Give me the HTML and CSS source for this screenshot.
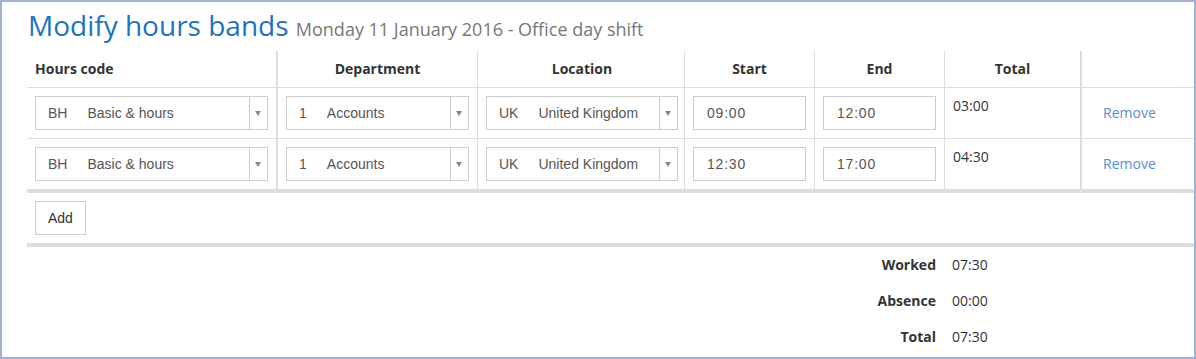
FILE: index.html
```html
<!DOCTYPE html>
<html lang="en">
<head>
  <meta charset="UTF-8">
  <title>Modify hours bands</title>
  <link rel="stylesheet" href="styles.css">
</head>
<body>
  <div class="window">
    <h1 class="title">Modify hours bands <small>Monday 11 January 2016 - Office day shift</small></h1>

    <table class="bands">
      <thead>
        <tr>
          <th class="col-code">Hours code</th>
          <th class="col-dept">Department</th>
          <th class="col-loc">Location</th>
          <th class="col-time">Start</th>
          <th class="col-time">End</th>
          <th class="col-total">Total</th>
          <th class="col-action"></th>
        </tr>
      </thead>
      <tbody>
        <tr>
          <td class="col-code"><div class="select"><span class="value"><span class="code">BH</span>Basic &amp; hours</span><span class="arrow"></span></div></td>
          <td class="col-dept"><div class="select"><span class="value"><span class="code">1</span>Accounts</span><span class="arrow"></span></div></td>
          <td class="col-loc"><div class="select"><span class="value"><span class="code">UK</span>United Kingdom</span><span class="arrow"></span></div></td>
          <td class="col-time"><input class="time" type="text" value="09:00"></td>
          <td class="col-time"><input class="time" type="text" value="12:00"></td>
          <td class="col-total">03:00</td>
          <td class="col-action"><a class="btn-link" href="#">Remove</a></td>
        </tr>
        <tr>
          <td class="col-code"><div class="select"><span class="value"><span class="code">BH</span>Basic &amp; hours</span><span class="arrow"></span></div></td>
          <td class="col-dept"><div class="select"><span class="value"><span class="code">1</span>Accounts</span><span class="arrow"></span></div></td>
          <td class="col-loc"><div class="select"><span class="value"><span class="code">UK</span>United Kingdom</span><span class="arrow"></span></div></td>
          <td class="col-time"><input class="time" type="text" value="12:30"></td>
          <td class="col-time"><input class="time" type="text" value="17:00"></td>
          <td class="col-total">04:30</td>
          <td class="col-action"><a class="btn-link" href="#">Remove</a></td>
        </tr>
      </tbody>
      <tfoot>
        <tr>
          <td colspan="7"><button class="btn">Add</button></td>
        </tr>
      </tfoot>
    </table>

    <div class="summary">
      <div class="label">Worked</div><div class="amount">07:30</div>
      <div class="label">Absence</div><div class="amount">00:00</div>
      <div class="label">Total</div><div class="amount">07:30</div>
    </div>
  </div>
</body>
</html>
```

FILE: styles.css
```css
body {
  margin: 0;
  font-family: "Open Sans", sans-serif;
  font-size: 14px;
  color: #333;
}
.window {
  box-sizing: border-box;
  height: 359px;
  border: 2px solid #a2b2d6;
  padding: 6px 0 0 25px;
  overflow: hidden;
}
.title {
  margin: 0 0 5px 1px;
  font-size: 28px;
  line-height: 34px;
  font-weight: normal;
  color: #1e73be;
}
.title small {
  font-size: 18px;
  color: #777;
}
.bands {
  width: 100%;
  table-layout: fixed;
  border-collapse: separate;
  border-spacing: 0;
}
.bands th,
.bands td {
  box-sizing: border-box;
  padding: 8px;
  line-height: 20px;
  vertical-align: top;
  border-bottom: 1px solid #ddd;
  border-right: 1px solid #ddd;
  text-align: left;
}
.bands th {
  font-weight: bold;
  text-align: center;
}
.bands th.col-code {
  text-align: left;
}
.col-code {
  width: 251px;
  border-right-width: 2px !important;
}
.col-dept {
  width: 200px;
}
.bands .col-loc {
  width: 207px;
  padding-right: 6px;
}
.col-time {
  width: 130px;
}
.col-total {
  width: 137px;
  border-right-width: 2px !important;
}
.bands .col-action {
  border-right: none;
  padding: 9px 8px 7px 9px;
}
.bands tbody tr:last-child td {
  border-bottom: 4px solid #ddd;
}
.bands tfoot td {
  border-right: none;
  border-bottom: 4px solid #ddd;
}
.select {
  display: flex;
  height: 34px;
  box-sizing: border-box;
  border: 1px solid #ccc;
  font-family: "Liberation Sans", Arial, sans-serif;
  font-size: 14px;
  color: #555;
}
.select .value {
  flex: 1;
  padding: 6px 12px;
  line-height: 20px;
  white-space: nowrap;
  overflow: hidden;
}
.select .code {
  margin-right: 20px;
}
.select .arrow {
  width: 17px;
  border-left: 1px solid #ccc;
  position: relative;
}
.select .arrow::after {
  content: "";
  position: absolute;
  left: 5px;
  top: 14px;
  border-left: 3.5px solid transparent;
  border-right: 3.5px solid transparent;
  border-top: 5px solid #888;
}
.time {
  display: block;
  box-sizing: border-box;
  width: 100%;
  height: 34px;
  margin: 0;
  padding: 6px 12px 6px 13px;
  border: 1px solid #ccc;
  border-radius: 0;
  font-family: "Liberation Sans", Arial, sans-serif;
  font-size: 14px;
  letter-spacing: 0.8px;
  color: #555;
}
.btn-link {
  display: inline-block;
  padding: 6px 12px;
  line-height: 20px;
  color: #5a8dce;
  text-decoration: none;
}
.btn {
  height: 34px;
  margin: 0;
  padding: 6px 12px;
  border: 1px solid #ccc;
  border-radius: 0;
  background: #fff;
  font-family: "Liberation Sans", Arial, sans-serif;
  font-size: 14px;
  color: #333;
}
.summary {
  display: grid;
  grid-template-columns: 917px auto;
  grid-auto-rows: 36px;
}
.summary .label {
  padding: 8px;
  line-height: 20px;
  text-align: right;
  font-weight: bold;
}
.summary .amount {
  padding: 8px;
  line-height: 20px;
}
```
